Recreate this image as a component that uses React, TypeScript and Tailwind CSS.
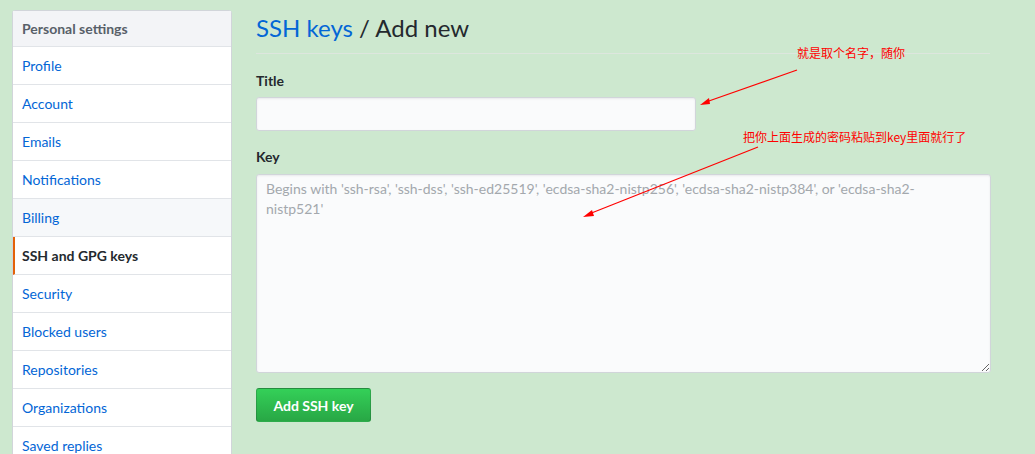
import React from "react";

const items = [
  "Profile",
  "Account",
  "Emails",
  "Notifications",
  "Billing",
  "SSH and GPG keys",
  "Security",
  "Blocked users",
  "Repositories",
  "Organizations",
  "Saved replies",
];

export default function App() {
  const font = { fontFamily: 'Lato, "Noto Sans", sans-serif' };
  return (
    <div
      className="relative w-[1035px] h-[454px] overflow-hidden bg-[#cde8cf] flex pl-[12px] pt-[10px] gap-[24px]"
      style={font}
    >
      <nav className="w-[220px] shrink-0 self-start bg-white border border-[#d1d5da] rounded-[3px] text-[14px]">
        <div className="h-[36px] flex items-center px-[9px] bg-[#f3f4f7] border-b border-[#e1e4e8] font-bold text-[#586069]">
          Personal settings
        </div>
        {items.map((it) => {
          const active = it === "SSH and GPG keys";
          const hover = it === "Billing";
          return (
            <div
              key={it}
              className={
                "h-[38px] flex items-center px-[9px] border-b border-[#e1e4e8] " +
                (active
                  ? "font-bold text-[#24292e] border-l-[2px] border-l-[#e36209] pl-[7px]"
                  : hover
                  ? "text-[#0366d6] bg-[#f6f8fa]"
                  : "text-[#0366d6]")
              }
            >
              {it}
            </div>
          );
        })}
      </nav>

      <main className="w-[734px] shrink-0">
        <h2 className="pt-[3px] pb-[10px] leading-[30px] text-[24px] font-normal text-[#24292e] border-b border-[#dde6de]">
          <span className="text-[#0366d6]">SSH keys</span> / Add new
        </h2>
        <div className="mt-[17px] text-[14px] font-bold leading-[20px] text-[#24292e]">Title</div>
        <input
          className="mt-[6px] block w-[440px] h-[34px] bg-[#fafbfc] border border-[#d1d5da] rounded-[3px] shadow-[inset_0_1px_2px_rgba(27,31,35,0.075)] px-[8px] text-[14px] outline-none"
        />
        <div className="mt-[16px] text-[14px] font-bold leading-[20px] text-[#24292e]">Key</div>
        <textarea
          className="mt-[7px] block w-[735px] h-[199px] bg-[#fafbfc] border border-[#d1d5da] rounded-[3px] shadow-[inset_0_1px_2px_rgba(27,31,35,0.075)] pl-[9px] pr-[8px] pt-[4px] text-[14px] leading-[20px] outline-none placeholder:text-[#a3a8ad]"
          placeholder={
            "Begins with 'ssh-rsa', 'ssh-dss', 'ssh-ed25519', 'ecdsa-sha2-nistp256', 'ecdsa-sha2-nistp384', or 'ecdsa-sha2-\nnistp521'"
          }
          style={font}
        />
        <button className="mt-[15px] h-[34px] w-[115px] rounded-[3px] border border-[rgba(27,31,35,0.2)] bg-gradient-to-b from-[#34d058] to-[#28a745] text-white font-bold text-[14px]">
          Add SSH key
        </button>
      </main>

      <div
        className="absolute left-[797px] top-[44px] text-[12px] leading-[18px] text-[#ff0000] whitespace-nowrap"
        style={{ fontFamily: '"Noto Sans CJK SC", sans-serif' }}
      >
        就是取个名字，随你
      </div>
      <div
        className="absolute left-[743px] top-[128px] text-[12px] leading-[18px] text-[#ff0000] whitespace-nowrap"
        style={{ fontFamily: '"Noto Sans CJK SC", sans-serif' }}
      >
        把你上面生成的密码粘贴到key里面就行了
      </div>
      <svg className="absolute left-0 top-0 pointer-events-none" width="1035" height="454">
        <line x1="797" y1="70" x2="706" y2="102" stroke="#ff0000" strokeWidth="1.2" />
        <polygon points="700,105 709,98 710,104" fill="#ff0000" />
        <line x1="758" y1="147" x2="589" y2="214" stroke="#ff0000" strokeWidth="1.2" />
        <polygon points="583,217 592,210 594,216" fill="#ff0000" />
      </svg>
    </div>
  );
}
